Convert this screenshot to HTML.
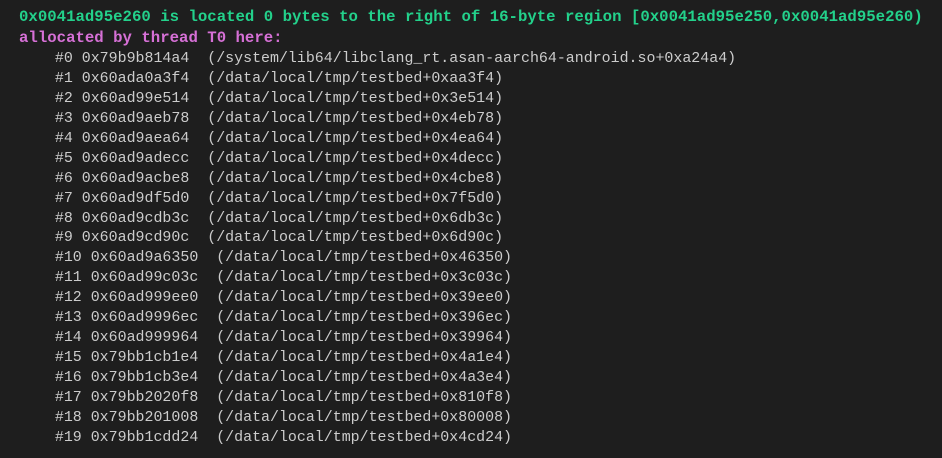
<!DOCTYPE html>
<html><head><style>
html,body{margin:0;padding:0;background:#1e1e1e;width:942px;height:458px;overflow:hidden}
pre{margin:0;padding:8px 0 0 19px;font-family:"Liberation Mono",monospace;font-size:14.95px;line-height:19.95px;color:#cccccc}
.g{color:#23d18b;font-weight:bold;font-size:15.7px}
.m{color:#d670d6;font-weight:bold;font-size:15.7px}
</style></head><body>
<pre><span class="g">0x0041ad95e260 is located 0 bytes to the right of 16-byte region [0x0041ad95e250,0x0041ad95e260)</span>
<span class="m">allocated by thread T0 here:</span>
    #0 0x79b9b814a4  (/system/lib64/libclang_rt.asan-aarch64-android.so+0xa24a4)
    #1 0x60ada0a3f4  (/data/local/tmp/testbed+0xaa3f4)
    #2 0x60ad99e514  (/data/local/tmp/testbed+0x3e514)
    #3 0x60ad9aeb78  (/data/local/tmp/testbed+0x4eb78)
    #4 0x60ad9aea64  (/data/local/tmp/testbed+0x4ea64)
    #5 0x60ad9adecc  (/data/local/tmp/testbed+0x4decc)
    #6 0x60ad9acbe8  (/data/local/tmp/testbed+0x4cbe8)
    #7 0x60ad9df5d0  (/data/local/tmp/testbed+0x7f5d0)
    #8 0x60ad9cdb3c  (/data/local/tmp/testbed+0x6db3c)
    #9 0x60ad9cd90c  (/data/local/tmp/testbed+0x6d90c)
    #10 0x60ad9a6350  (/data/local/tmp/testbed+0x46350)
    #11 0x60ad99c03c  (/data/local/tmp/testbed+0x3c03c)
    #12 0x60ad999ee0  (/data/local/tmp/testbed+0x39ee0)
    #13 0x60ad9996ec  (/data/local/tmp/testbed+0x396ec)
    #14 0x60ad999964  (/data/local/tmp/testbed+0x39964)
    #15 0x79bb1cb1e4  (/data/local/tmp/testbed+0x4a1e4)
    #16 0x79bb1cb3e4  (/data/local/tmp/testbed+0x4a3e4)
    #17 0x79bb2020f8  (/data/local/tmp/testbed+0x810f8)
    #18 0x79bb201008  (/data/local/tmp/testbed+0x80008)
    #19 0x79bb1cdd24  (/data/local/tmp/testbed+0x4cd24)</pre>
</body></html>
